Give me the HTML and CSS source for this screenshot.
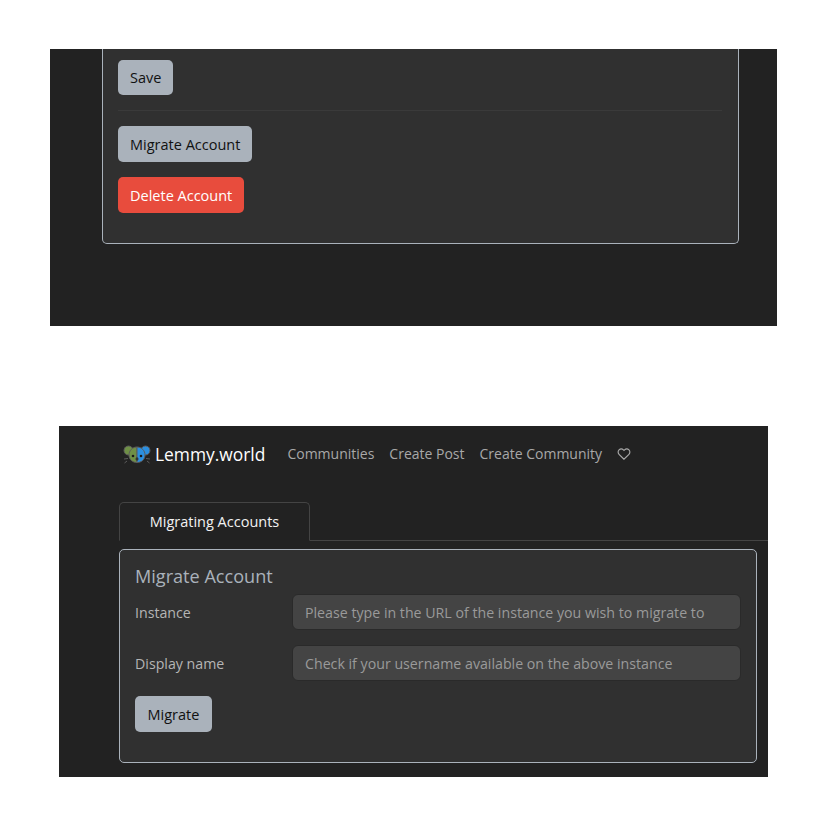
FILE: index.html
```html
<!DOCTYPE html>
<html>
<head>
    <meta name="viewport" content="width=device-width, initial-scale=1">
    <link rel="stylesheet" href="styles.css">
</head>

<body>
    <div class="shot shot-top">
        <div class="card card-settings">
            <button class="btn btn-grey btn-save">Save</button>
            <hr class="divider">
            <button class="btn btn-grey btn-block">Migrate Account</button>
            <button class="btn btn-red btn-block">Delete Account</button>
        </div>
    </div>

    <div class="shot shot-bottom">
        <nav class="navbar">
            <a class="brand">
                <svg class="logo" width="28" height="20" viewBox="0 0 28 20">
                    <g stroke="#5c5c5c" stroke-width="1">
                        <path d="M4 17 1.500 19M24 17l2.500 2M5 14.500 1 15M23 14.500l4 .5" fill="none"/>
                        <circle cx="5.500" cy="6.500" r="4.500" fill="#6f9046"/>
                        <circle cx="22.500" cy="6.500" r="4.500" fill="#2b8fe0"/>
                        <path d="M14 3C9 3 6 7 6 11c0 4.500 3.500 7.500 8 7.500z" fill="#6f9046"/>
                        <path d="M14 3c5 0 8 4 8 8 0 4.500-3.500 7.500-8 7.500z" fill="#2b8fe0"/>
                    </g>
                    <circle cx="10" cy="12" r="1.300" fill="#1a1a1a"/>
                    <circle cx="18" cy="12" r="1.300" fill="#1a1a1a"/>
                    <ellipse cx="14" cy="15" rx="1.500" ry="1.800" fill="#333"/>
                </svg>
                Lemmy.world
            </a>
            <a class="nav-link">Communities</a>
            <a class="nav-link">Create Post</a>
            <a class="nav-link">Create Community</a>
            <svg class="heart" width="14" height="14" viewBox="0 0 24 24" fill="none" stroke="#a8a8a8" stroke-width="2">
                <path d="M12 21 3.500 12.500a5.300 5.300 0 0 1 7.500-7.500l1 1 1-1a5.300 5.300 0 0 1 7.500 7.500z"/>
            </svg>
        </nav>

        <div class="tabs">
            <div class="tab">Migrating Accounts</div>
        </div>

        <div class="card card-migrate">
            <h5 class="card-title">Migrate Account</h5>
            <div class="form-row">
                <label>Instance</label>
                <input class="form-input" type="text" placeholder="Please type in the URL of the instance you wish to migrate to">
            </div>
            <div class="form-row">
                <label>Display name</label>
                <input class="form-input" type="text" placeholder="Check if your username available on the above instance">
            </div>
            <button class="btn btn-grey btn-migrate">Migrate</button>
        </div>
    </div>
</body>
</html>
```

FILE: styles.css
```css
* {
    box-sizing: border-box;
    font-family: 'Open Sans', sans-serif;
}

body {
    margin: 0;
    background: #fff;
    height: 827px;
    overflow: hidden;
}

.shot {
    background: #222;
}

.shot-top {
    width: 727px;
    height: 277px;
    margin: 49px 0 0 50px;
    padding: 0 38px 0 52px;
}

.shot-bottom {
    width: 709px;
    height: 351px;
    margin: 100px 0 0 59px;
    padding-left: 60px;
}

.card {
    background: #303030;
    border: 1px solid #aab2bb;
    border-radius: 5px;
}

.card-settings {
    height: 195px;
    padding: 11px 16px 0 15px;
    border-top: none;
    border-top-left-radius: 0;
    border-top-right-radius: 0;
}

.btn {
    display: block;
    border: none;
    border-radius: 5px;
    font-size: 14.5px;
    padding: 0 12px;
    height: 36px;
}

.btn-grey {
    background: #aab2bb;
    color: #111;
}

.btn-red {
    background: #e84c3d;
    color: #fff;
}

.btn-save {
    height: 35px;
}

.btn-block {
    margin-bottom: 15px;
}

.btn-migrate {
    padding: 0 12.5px;
}

.divider {
    border: none;
    border-top: 1px solid #3a3a3a;
    margin: 15px 0;
}

.navbar {
    display: flex;
    align-items: center;
    height: 55px;
    padding-left: 4px;
}

.brand {
    display: flex;
    align-items: center;
    gap: 4px;
    color: #fff;
    font-size: 17.4px;
    margin-right: 14.5px;
}

.nav-link {
    color: #a8a8a8;
    font-size: 14px;
    padding: 0 7.5px;
}

.heart {
    margin-left: 7.5px;
}

.tabs {
    margin-top: 21px;
    border-bottom: 1px solid #444;
    height: 39px;
}

.tab {
    width: 191px;
    height: 39px;
    text-align: center;
    line-height: 38px;
    color: #f2f2f2;
    font-size: 14.5px;
    background: #222;
    border: 1px solid #444;
    border-bottom: 1px solid #222;
    border-radius: 5px 5px 0 0;
}

.card-migrate {
    width: 638px;
    height: 214px;
    margin-top: 8px;
    padding: 14px 15px;
}

.card-title {
    margin: 0 0 6px;
    font-size: 18.1px;
    font-weight: 400;
    color: #aab2bb;
}

.form-row {
    display: flex;
    align-items: center;
    margin-bottom: 15px;
}

.form-row label {
    width: 157px;
    color: #b5b5b5;
    font-size: 14.2px;
}

.form-input {
    width: 449px;
    height: 36px;
    padding: 0 12px;
    background: #444;
    border: 1px solid #2a2a2a;
    border-radius: 6px;
    color: #ddd;
    font-size: 14.2px;
}

.form-input::placeholder {
    color: #9a9a9a;
    opacity: 1;
}
```
